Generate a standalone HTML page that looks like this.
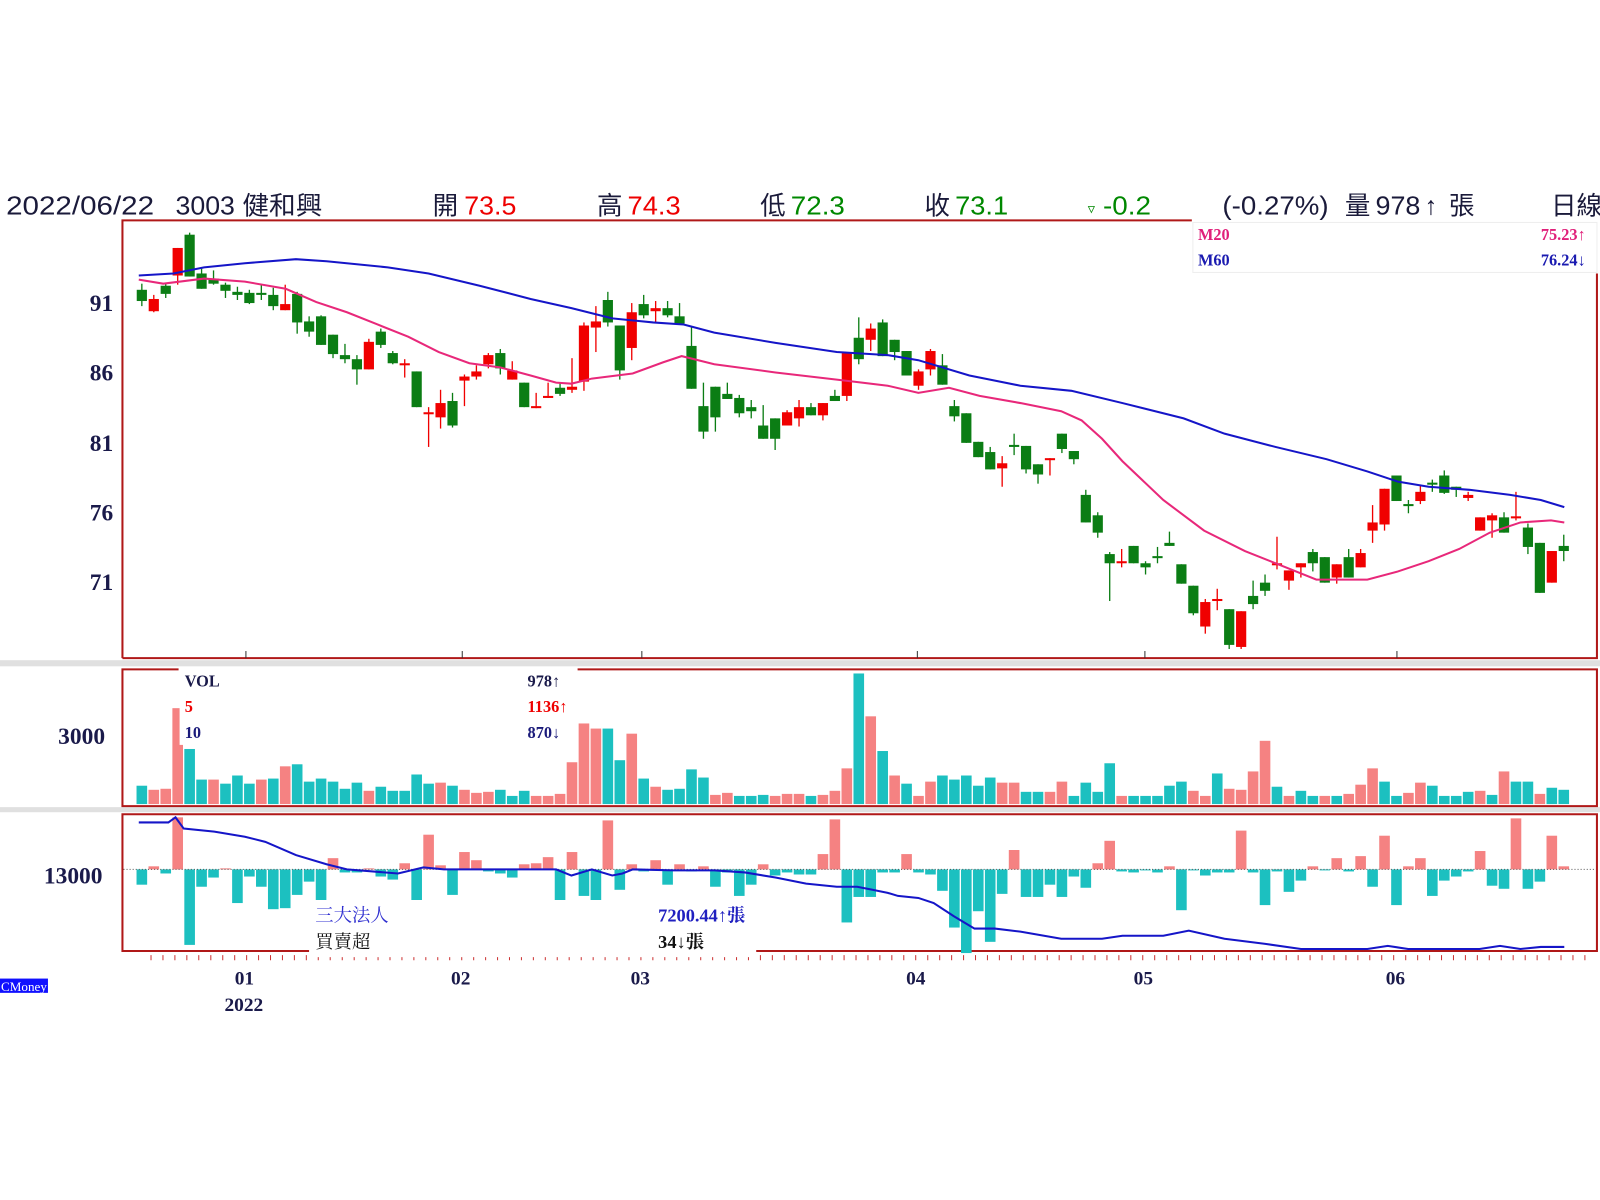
<!DOCTYPE html>
<html><head><meta charset="utf-8">
<style>
html,body{margin:0;padding:0;background:#fff;width:1600px;height:1200px;overflow:hidden}
svg{display:block}
.h{font-family:"Liberation Sans","Noto Sans CJK TC",sans-serif;font-size:25px;fill:#1a1a3a}
.ax{font-family:"Liberation Serif","Noto Serif CJK SC",serif;font-weight:bold;font-size:23px;fill:#1a1a4a}
.lg{font-family:"Liberation Serif","Noto Serif CJK SC",serif;font-weight:bold;font-size:16px}
.lc{font-family:"Liberation Serif","Noto Serif CJK SC","Noto Sans CJK TC",serif;font-size:18px}
</style></head><body>
<svg id="s" width="1600" height="1200" viewBox="0 0 1568 1176" preserveAspectRatio="none" xmlns="http://www.w3.org/2000/svg">
<g id="g"></g>
<text class="h" x="6" y="210" textLength="145" lengthAdjust="spacingAndGlyphs">2022/06/22</text>
<text class="h" x="172" y="210" textLength="144" lengthAdjust="spacingAndGlyphs">3003 健和興</text>
<text class="h" x="424" y="210">開</text><text class="h" x="455" y="210" style="fill:#e00" textLength="51" lengthAdjust="spacingAndGlyphs">73.5</text>
<text class="h" x="585" y="210">高</text><text class="h" x="615" y="210" style="fill:#e00" textLength="52" lengthAdjust="spacingAndGlyphs">74.3</text>
<text class="h" x="745" y="210">低</text><text class="h" x="775" y="210" style="fill:#080" textLength="53" lengthAdjust="spacingAndGlyphs">72.3</text>
<text class="h" x="906" y="210">收</text><text class="h" x="936" y="210" style="fill:#080" textLength="52" lengthAdjust="spacingAndGlyphs">73.1</text>
<text class="h" x="1066" y="209" style="fill:#080;font-size:14px">▿</text><text class="h" x="1081" y="210" style="fill:#080" textLength="47" lengthAdjust="spacingAndGlyphs">-0.2</text>
<text class="h" x="1198" y="210" textLength="104" lengthAdjust="spacingAndGlyphs">(-0.27%)</text>
<text class="h" x="1318" y="210">量</text><text class="h" x="1348" y="210" textLength="44" lengthAdjust="spacingAndGlyphs">978</text><text class="h" x="1396" y="210">↑</text><text class="h" x="1420" y="210">張</text>
<text class="h" x="1520" y="210">日線</text>
<text class="ax" x="88" y="305">91</text>
<text class="ax" x="88" y="373">86</text>
<text class="ax" x="88" y="442">81</text>
<text class="ax" x="88" y="510">76</text>
<text class="ax" x="88" y="578">71</text>
<text class="ax" x="57" y="729">3000</text>
<text class="ax" x="43" y="866">13000</text>
<g class="ax" style="font-size:19px">
<text x="230" y="965">01</text><text x="220" y="991">2022</text>
<text x="442" y="965">02</text><text x="618" y="965">03</text><text x="888" y="965">04</text><text x="1111" y="965">05</text><text x="1358" y="965">06</text>
</g>
<rect x="0" y="959" width="47" height="14" fill="#1010ff"/>
<text x="1" y="971" style="font-family:'Liberation Serif',serif;font-size:12px;fill:#fff" textLength="45" lengthAdjust="spacingAndGlyphs">CMoney</text>
<rect x="1169" y="218" width="396" height="49" fill="#fff" stroke="#eee"/>
<text class="lg" x="1174" y="235" fill="#e0207a">M20</text><text class="lg" x="1510" y="235" fill="#e0207a">75.23↑</text>
<text class="lg" x="1174" y="260" fill="#1a1ab0">M60</text><text class="lg" x="1510" y="260" fill="#1a1ab0">76.24↓</text>
<rect x="176" y="655" width="390" height="75" fill="#fff"/>
<text class="lg" x="181" y="673" fill="#1a1a4a">VOL</text><text class="lg" x="517" y="673" fill="#1a1a4a">978↑</text>
<text class="lg" x="181" y="698" fill="#e00">5</text><text class="lg" x="517" y="698" fill="#e00">1136↑</text>
<text class="lg" x="181" y="723" fill="#1a1a7a">10</text><text class="lg" x="517" y="723" fill="#1a1a7a">870↓</text>
<rect x="303" y="882" width="438" height="56" fill="#fff"/>
<text class="lc" x="309" y="903" fill="#3030d0">三大法人</text><text class="lc" x="645" y="903" fill="#2020c0" style="font-weight:bold">7200.44↑張</text>
<text class="lc" x="309" y="929" fill="#111">買賣超</text><text class="lc" x="645" y="929" fill="#111" style="font-weight:bold">34↓張</text>
</svg>
<script>
var NS="http://www.w3.org/2000/svg",G=document.getElementById('g');
function el(t,a){var e=document.createElementNS(NS,t);for(var k in a)e.setAttribute(k,a[k]);G.appendChild(e);return e;}
function X(i){return 139+i*11.71;}
el('rect',{x:0,y:647,width:1600,height:6,fill:'#e0e0e0'});
el('rect',{x:0,y:791,width:1600,height:5,fill:'#e0e0e0'});
var R='#b01818';
el('path',{d:'M120 645V216H1168M1565 268V645H120',fill:'none',stroke:R,'stroke-width':2});
el('path',{d:'M175 656H120V790H1565V656H566',fill:'none',stroke:R,'stroke-width':2});
el('path',{d:'M303 932H120V798H1565V932H741',fill:'none',stroke:R,'stroke-width':2});
[241,453,629,899,1122,1369].forEach(function(x){el('line',{x1:x,y1:638,x2:x,y2:645,stroke:'#333'});});
var d='';for(var x=148;x<1560;x+=11.71){d+='M'+x.toFixed(1)+' 936v5';}
el('path',{d:d,stroke:'#c33','stroke-width':1});
var C=[[284,295,278,300,'g'],[293,305,289,306,'r'],[280,288,278,292,'g'],[243,270,243,279,'r'],[230,271,228,271,'g'],[268,283,262,283,'g'],[273,278,265,279,'g'],[279,285,277,292,'g'],[286,289,281,294,'g'],[287,297,284,298,'g'],[287,289,279,294,'g'],[289,300,282,304,'g'],[298,304,279,304,'r'],[288,316,286,327,'g'],[315,325,310,330,'g'],[310,338,309,338,'g'],[328,347,328,351,'g'],[348,352,337,356,'g'],[352,362,348,377,'g'],[335,362,332,362,'r'],[325,338,322,341,'g'],[346,356,344,357,'g'],[356,358,352,370,'r'],[364,399,364,399,'g'],[404,406,399,438,'r'],[395,409,382,420,'r'],[393,417,385,419,'g'],[369,373,367,398,'r'],[364,369,358,372,'r'],[348,357,346,361,'r'],[346,361,342,367,'g'],[363,372,354,372,'r'],[375,399,375,399,'g'],[398,400,385,400,'r'],[388,390,375,390,'r'],[380,386,375,388,'g'],[379,382,351,385,'r'],[319,374,316,383,'r'],[315,321,300,345,'r'],[294,316,286,320,'g'],[319,363,319,372,'g'],[306,341,297,353,'r'],[298,309,289,312,'g'],[302,305,295,316,'r'],[302,309,295,311,'g'],[310,317,297,317,'g'],[339,381,320,381,'g'],[398,423,375,430,'g'],[379,409,379,423,'g'],[386,391,375,391,'g'],[390,405,387,409,'g'],[399,403,392,410,'g'],[417,430,397,430,'g'],[410,430,410,441,'g'],[404,417,402,417,'r'],[399,410,392,418,'r'],[399,407,395,407,'g'],[395,407,395,412,'r'],[388,393,382,393,'g'],[346,388,346,393,'r'],[331,352,311,357,'g'],[322,333,317,344,'r'],[316,349,313,349,'g'],[333,345,333,353,'g'],[344,368,344,368,'g'],[364,378,362,382,'r'],[344,362,342,368,'r'],[358,377,347,377,'g'],[398,408,392,413,'g'],[405,434,405,434,'g'],[433,448,433,448,'g'],[443,460,438,460,'g'],[454,459,447,477,'r'],[436,438,425,446,'g'],[437,460,437,464,'g'],[455,465,455,474,'g'],[449,451,449,466,'r'],[425,440,425,444,'g'],[442,450,442,455,'g'],[485,512,480,512,'g'],[505,522,502,527,'g'],[543,552,541,589,'g'],[550,552,538,556,'r'],[535,552,535,552,'g'],[552,556,550,563,'g'],[545,547,536,552,'g'],[532,535,521,535,'g'],[553,572,553,572,'g'],[574,601,574,603,'g'],[590,614,587,621,'r'],[587,589,577,598,'r'],[597,632,597,636,'g'],[599,634,599,636,'r'],[584,592,569,597,'g'],[571,579,563,584,'g'],[552,554,526,558,'r'],[559,569,559,578,'r'],[552,556,552,566,'r'],[541,552,538,560,'g'],[546,571,546,571,'g'],[553,566,553,572,'r'],[546,566,538,566,'g'],[542,556,538,556,'r'],[512,520,495,532,'r'],[479,514,479,520,'r'],[466,491,466,491,'g'],[494,496,490,503,'g'],[482,491,476,494,'r'],[473,475,470,482,'g'],[466,483,461,484,'g'],[477,480,477,487,'g'],[485,488,482,491,'r'],[507,520,507,520,'r'],[505,510,503,527,'r'],[507,522,502,522,'g'],[506,508,482,510,'r'],[517,536,513,543,'g'],[532,581,532,581,'g'],[540,571,540,571,'r'],[535,540,524,550,'g']];
C.forEach(function(c,i){var x=X(i),col=c[4]=='g'?'#0b7d14':'#f00000';
el('line',{x1:x,y1:c[2],x2:x,y2:c[3],stroke:col,'stroke-width':1.3});
el('rect',{x:x-5,y:c[0],width:10,height:Math.max(2,c[1]-c[0]),fill:col});});
function line(p,col,w){el('polyline',{points:p,fill:'none',stroke:col,'stroke-width':w});}
line('136,270 170,268 200,262 240,258 290,254 320,256 380,262 420,268 470,280 520,293 560,302 600,312 640,316 670,318 700,326 760,336 820,345 870,348 900,353 950,368 1000,378 1050,383 1100,395 1160,410 1200,425 1250,438 1300,450 1340,462 1370,472 1400,477 1440,480 1480,485 1510,490 1533,497','#1515c8',2);
line('136,274 160,278 200,273 240,276 280,283 310,296 340,306 370,318 400,330 430,345 460,356 490,360 520,368 545,375 560,376 580,371 620,366 650,355 668,349 700,357 760,365 820,372 870,378 900,385 930,380 960,388 1000,395 1040,403 1060,412 1080,430 1100,452 1140,490 1180,520 1220,540 1260,556 1290,568 1340,568 1370,560 1400,550 1430,538 1460,522 1490,512 1520,510 1533,512','#e8287a',2);
var VH=[18,14,15,94,54,24,24,20,28,20,24,25,37,39,22,25,22,15,21,13,17,13,13,29,20,21,18,14,11,12,14,8,13,8,8,10,41,79,74,74,43,69,25,17,14,15,34,26,9,11,4,5,9,8,10,10,6,9,13,35,128,86,52,28,20,5,22,28,24,28,18,26,21,21,12,12,12,22,8,21,12,40,8,4,4,4,18,22,13,4,30,15,14,32,62,17,8,13,4,5,4,10,19,35,22,7,11,21,18,4,4,12,13,9,32,22,22,10,16,14];
var VC="trrrttrtttrtrttttttrtttttrtrrrtttrrrrrrttr"+"trttttrrtttrrrtrrrtrtrtrrtttttrrttrrttttrtttttrrtrrrrtrttrtrrrttrrttttrtrttrtt";
for(var i=0;i<120;i++){var h=Math.max(8,VH[i]||10),c=(VC[i]||'t')=='r'?'#f58282':'#1cc0c0';
el('rect',{x:X(i)-5.2,y:788-h,width:10.4,height:h,fill:c});}
var I=[-15,3,-4,51,-74,-17,-8,0,-33,-7,-17,-39,-38,-25,-12,-31,11,-3,-3,0,-7,-10,6,-31,34,4,-25,17,9,-2,-4,-8,5,6,12,-31,17,-26,-31,
48,-20,5,-2,9,-15,5,-2,3,-17,-3,-26,-15,5,-6,-3,-5,-5,15,49,-52,-27,-27,-3,-3,15,-3,-5,-21,-57,-82,-41,-71,-24,19,-27,-27,-15,-27,-7,-18,6,28,-2,-3,-1,-3,3,-40,-1,-6,-3,-3,38,-3,-35,-2,-22,-11,3,-1,11,-2,13,-17,33,-35,3,11,-26,-11,-7,-2,18,-16,-19,50,-19,-12,33,3];
for(var i=0;i<120;i++){var v=I[i]||0;if(v==0)v=1;var c=v>0?'#f58282':'#1cc0c0';
el('rect',{x:X(i)-5.2,y:v>0?852-v:852,width:10.4,height:Math.abs(v),fill:c});}
el('line',{x1:121,y1:852,x2:1564,y2:852,stroke:'#555','stroke-dasharray':'1 2'});
line('136,806 165,806 172,801 180,812 210,815 240,820 260,825 290,838 320,847 340,852 390,856 415,850 435,852 470,852 510,852 545,852 560,858 580,852 600,858 610,856 620,852 660,853 700,853 730,855 760,860 790,866 820,869 840,869 855,872 870,875 880,878 900,880 915,885 935,898 955,910 975,910 1000,913 1040,920 1080,920 1100,917 1140,917 1165,912 1200,920 1240,925 1275,930 1340,930 1360,927 1380,930 1450,930 1470,927 1490,930 1510,928 1533,928','#1515c8',2);
var s=document.getElementById('s');s.insertBefore(G,s.firstChild);
</script>
</body></html>
